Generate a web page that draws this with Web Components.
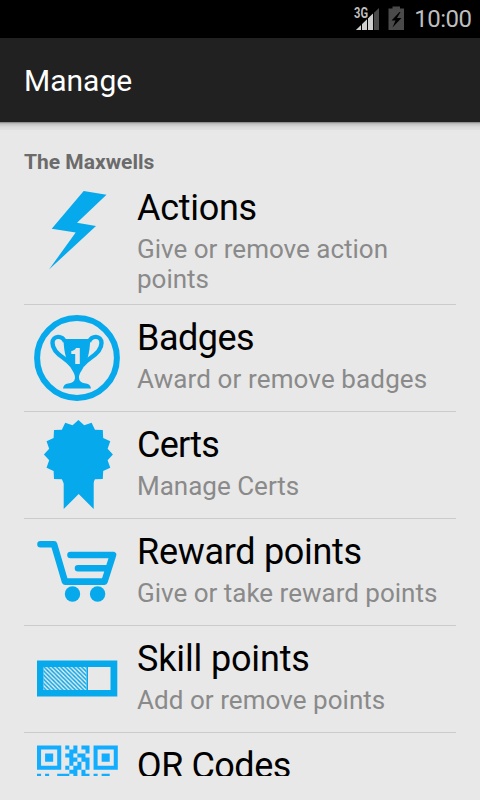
<!DOCTYPE html>
<html lang="en">
<head>
<meta charset="utf-8">
<title>Manage</title>
<style>
  html, body { margin: 0; height: 100%; }
  body { background: #e8e8e8; font-family: Roboto, sans-serif; overflow: hidden; }
</style>
</head>
<body>

<manage-screen>
  <status-bar slot="status" time="10:00"></status-bar>
  <action-bar slot="bar">Manage</action-bar>
  <section-title>The Maxwells</section-title>
  <menu-row icon="bolt"><span slot="title">Actions</span>Give or remove action points</menu-row>
  <menu-row icon="trophy" style="--title-spacing: -0.5px; --sub-spacing: 0.12px"><span slot="title">Badges</span>Award or remove badges</menu-row>
  <menu-row icon="cert" style="--title-spacing: -0.8px"><span slot="title">Certs</span>Manage Certs</menu-row>
  <menu-row icon="cart"><span slot="title">Reward points</span>Give or take reward points</menu-row>
  <menu-row icon="meter" style="--title-spacing: -0.15px; --sub-spacing: 0.05px"><span slot="title">Skill points</span>Add or remove points</menu-row>
  <menu-row icon="qr" style="--title-spacing: -0.5px"><span slot="title">QR Codes</span></menu-row>
</manage-screen>

<script>
// Every component gets an open shadow root filled from a template
function attach(host, html) {
  const template = document.createElement('template');
  template.innerHTML = html;
  const root = host.attachShadow({ mode: 'open' });
  root.appendChild(template.content.cloneNode(true));
  return root;
}

// zig-zag seal outline
function sealPoints(cx, cy, outer, inner, n) {
  const pts = [];
  for (let i = 0; i < n * 2; i++) {
    const r = i % 2 ? inner : outer;
    const a = -Math.PI / 2 + i * Math.PI / n;
    pts.push((cx + r * Math.cos(a)).toFixed(2) + ',' + (cy + r * Math.sin(a)).toFixed(2));
  }
  return pts.join(' ');
}

// # = filled module
const QR_ROWS = [
  '###### #.#.## ######',
  '#....# .##..# #....#',
  '#.##.# ##.##. #.##.#',
  '#.##.# .##.## #.##.#',
  '#....# .#.#.# #....#',
  '###### #.##.# ######',
  '........##.#........',
  '#.#..###.#.##.#.##..'
];

function qrPath(x0, y0, size) {
  let d = '';
  QR_ROWS.forEach((row, y) => {
    // the blanks are the quiet columns between the finder squares
    [...row].forEach((c, x) => {
      if (c === '#') d += `M${x0 + x * size} ${y0 + y * size}h${size}v${size}h-${size}z`;
    });
  });
  return d;
}

// All icons are drawn on a 90x90 canvas
const ICONS = {
  bolt: `<path d="M51.7 8 74.5 11.8 45 39.700 64 43 17 86.5 43.7 49.5 19.7 45.7Z"/>`,
  trophy: `
    <circle cx="45" cy="45" r="39.9" fill="none" stroke="#06a9ec" stroke-width="6"/>
    <path d="M31.5 26H58.2C58 41 54.500 50 50.500 56C47.500 61 47 62 47 65C47.500 69 50 70 54 70.500C57 71 58.500 72.500 59 75.500H31C31.500 72.500 33 71 36 70.500C40 70 42.500 69 43 65C43 62 42.500 61 39.500 56C35.500 50 31.700 41 31.500 26Z"/>
    <path d="M33 29C31 22 20.500 22 20.500 30C20.500 37 27 42 31.500 45C35 47.500 37 49 39.500 52M57 29C59 22 69.500 22 69.500 30C69.500 37 63 42 58.500 45C55 47.500 53 49 50.500 52" fill="none" stroke="#06a9ec" stroke-width="4.400"/>
    <path d="M44 35H47.800V51H43.200V41H39.300V38C41.500 37.700 43.200 36.800 44 35Z" fill="#e8e8e8"/>`,
  cert: `<polygon points="${sealPoints(46.4, 34.5, 34.5, 29.8, 16)}"/><path d="M31.700 54H61.700V89L46.700 74 31.700 89Z"/>`,
  cart: `
    <g fill="none" stroke="#06a9ec" stroke-width="6.600" stroke-linecap="round" stroke-linejoin="round">
      <path d="M8.500 17.300H22L33 54.600H72.500L81 28H38.500M46 41.200H76"/>
    </g>
    <circle cx="40.500" cy="67" r="7.700"/><circle cx="65.600" cy="67" r="7.700"/>`,
  meter: `
    <defs><pattern id="hatch" width="4.200" height="4.200" patternUnits="userSpaceOnUse">
      <path d="M-1-1 5.200 5.200M-1 3.200 1 5.200M3.200-1 5.200 1" stroke="#06a9ec" stroke-width="1.500"/>
    </pattern></defs>
    <path fill-rule="evenodd" d="M5 26.500H85.300V62.500H5ZM11.500 33V56H54.500V33ZM56 33V56H78.500V33Z"/>
    <path d="M11.500 33H54.500V56H11.500Z" fill="url(#hatch)"/>`,
  qr: `<path d="${qrPath(5, 4.5, 4.04)}" fill="#12adff"/>`
};

class StatusBar extends HTMLElement {
  constructor() {
    super();
    const root = attach(this, `
      <style>
        :host { display: flex; justify-content: flex-end; height: 38px; box-sizing: border-box;
          padding-right: 9px; background: #000; color: #bebebe; }
        svg { display: block; width: 60px; height: 38px; }
        .net { font: 700 14.5px Roboto, sans-serif; fill: #bebebe; }
        .time { font-size: 24px; line-height: 39px; margin-left: 4px; letter-spacing: -0.5px; margin-right: -0.5px; }
      </style>
      <svg viewBox="350 0 60 38">
        <path d="M379 8V30H356Z" fill="#4a4a4a"/>
        <path d="M373.500 13V30H356Z" fill="#cfcfcf"/>
        <path d="M361.500 10V30M367.500 10V30M373.500 10V30" stroke="#000"/>
        <path d="M352 5H368.500V18H352Z" fill="#000"/>
        <text class="net" x="354" y="17.500" textLength="14" lengthAdjust="spacingAndGlyphs">3G</text>
        <path d="M388.500 8.500H392.500V6.500H400V8.500H404V30H388.500Z" fill="#4a4a4a"/>
        <path d="M399.500 12 391.500 20.500H395.500L392.500 27.500 401.500 18H397L400.500 12Z" fill="#000"/>
      </svg>
      <span class="time"></span>
    `);
    root.querySelector('.time').textContent = this.getAttribute('time');
  }
}

class ActionBar extends HTMLElement {
  constructor() {
    super();
    attach(this, `
      <style>
        :host { display: flex; align-items: center; height: 84px; box-sizing: border-box;
          padding: 0 24px; background: #212121; color: #fff; font-size: 30px; }
      </style>
      <slot></slot>
    `);
  }
}

class SectionTitle extends HTMLElement {
  constructor() {
    super();
    attach(this, `
      <style>
        :host { display: block; height: 45px; box-sizing: border-box; padding-top: 20px;
          color: #6b6b6b; font-size: 21px; font-weight: 700; line-height: 25px; }
      </style>
      <slot></slot>
    `);
  }
}

class MenuRow extends HTMLElement {
  constructor() {
    super();
    attach(this, `
      <style>
        :host { display: flex; border-bottom: 1px solid #cbcbcb; }
        svg { flex: none; display: block; width: 90px; height: 90px; margin: 8px 15px 8px 8px;
          fill: #06a9ec; overflow: visible; }
        .text { padding: 12px 8px 10px 0; }
        .title { color: #000; font-size: 36px; line-height: 42px;
          letter-spacing: var(--title-spacing, -0.3px); }
        .sub { margin-top: 5px; color: #8a8a8a; font-size: 26px; line-height: 30px;
          letter-spacing: var(--sub-spacing, 0); }
      </style>
      <svg viewBox="0 0 90 90">${ICONS[this.getAttribute('icon')]}</svg>
      <div class="text">
        <div class="title"><slot name="title"></slot></div>
        <div class="sub"><slot></slot></div>
      </div>
    `);
  }
}

class ManageScreen extends HTMLElement {
  constructor() {
    super();
    attach(this, `
      <style>
        :host { display: flex; flex-direction: column; height: 776px; width: 480px; overflow: hidden; }
        .shade { flex: none; height: 8px;
          background: linear-gradient(#777 0, #aaa 1px, #c4c4c4 2px, #d4d4d4 4px, #dedede 6px, #e0e0e0 8px); }
        .list { flex: 1; min-height: 0; overflow: hidden; padding: 0 24px; }
      </style>
      <slot name="status"></slot>
      <slot name="bar"></slot>
      <div class="shade"></div>
      <div class="list"><slot></slot></div>
    `);
  }
}

customElements.define('status-bar', StatusBar);
customElements.define('action-bar', ActionBar);
customElements.define('section-title', SectionTitle);
customElements.define('menu-row', MenuRow);
customElements.define('manage-screen', ManageScreen);
</script>
</body>
</html>
